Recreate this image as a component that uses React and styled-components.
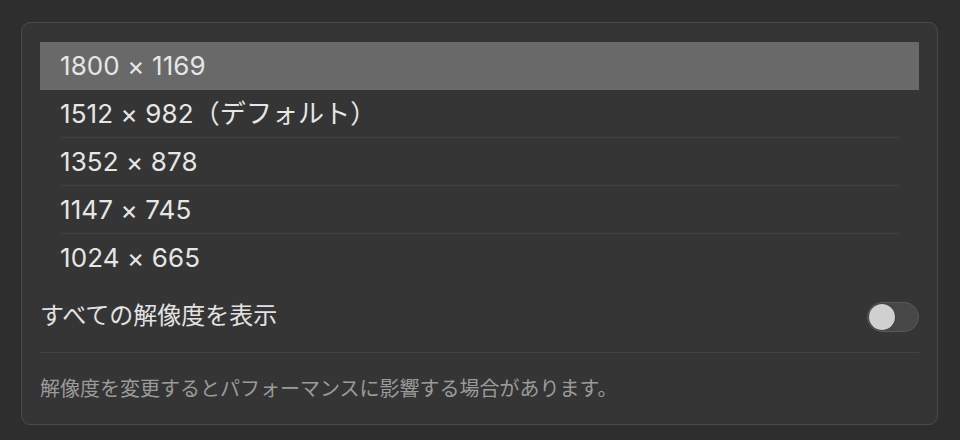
import React, { useState } from "react";
import styled, { createGlobalStyle } from "styled-components";

const GlobalStyle = createGlobalStyle`
  html, body {
    margin: 0;
    padding: 0;
    background: #2e2e2e;
  }
  body {
    font-family: "Inter", "Noto Sans CJK JP", sans-serif;
    -webkit-font-smoothing: antialiased;
  }
`;

const RESOLUTIONS = [
  "1800 × 1169",
  "1512 × 982（デフォルト）",
  "1352 × 878",
  "1147 × 745",
  "1024 × 665",
];

export const App = () => {
  const [selected, setSelected] = useState(0);
  const [showAll, setShowAll] = useState(false);

  return (
    <>
      <GlobalStyle />
      <StyledPage>
        <StyledPanel>
          <StyledList>
            {RESOLUTIONS.map((label, i) => (
              <StyledRow
                key={label}
                $selected={i === selected}
                $divider={i > 0 && i !== selected && i - 1 !== selected}
                onClick={() => setSelected(i)}
              >
                {label}
              </StyledRow>
            ))}
          </StyledList>
          <StyledToggleRow>
            <StyledToggleLabel>すべての解像度を表示</StyledToggleLabel>
            <StyledSwitch $on={showAll} onClick={() => setShowAll(!showAll)}>
              <StyledKnob $on={showAll} />
            </StyledSwitch>
          </StyledToggleRow>
          <StyledNote>解像度を変更するとパフォーマンスに影響する場合があります。</StyledNote>
        </StyledPanel>
      </StyledPage>
    </>
  );
};
export default App;

const StyledPage = styled.div`
  width: 960px;
  height: 440px;
  padding: 22px 0 0 21px;
  box-sizing: border-box;
`;

const StyledPanel = styled.div`
  width: 917px;
  height: 403px;
  box-sizing: border-box;
  border: 1px solid #4a4a4a;
  border-radius: 9px;
  background: #353535;
  padding: 19px 18px 0 18px;
  display: flex;
  flex-direction: column;
`;

const StyledList = styled.div`
  display: flex;
  flex-direction: column;
`;

const StyledRow = styled.div`
  position: relative;
  height: 48px;
  display: flex;
  align-items: center;
  padding: 0 20px;
  font-size: 26px;
  line-height: 1;
  letter-spacing: 0.1px;
  color: #e6e6e6;
  background: ${(p) => (p.$selected ? "#696969" : "transparent")};
  cursor: default;

  &::before {
    content: "";
    display: ${(p) => (p.$divider ? "block" : "none")};
    position: absolute;
    top: -1px;
    left: 20px;
    right: 20px;
    height: 1px;
    background: #414141;
  }
`;

const StyledToggleRow = styled.div`
  height: 70px;
  display: flex;
  align-items: center;
  justify-content: space-between;
  border-bottom: 1px solid #434343;
`;

const StyledToggleLabel = styled.div`
  font-size: 24px;
  line-height: 1;
  margin-top: -3px;
  color: #e2e2e2;
`;

const StyledSwitch = styled.div`
  width: 52px;
  height: 30px;
  box-sizing: border-box;
  border-radius: 15px;
  border: 1px solid #5a5a5a;
  background: ${(p) => (p.$on ? "#0a84ff" : "#474747")};
  padding: 1px;
  display: flex;
  justify-content: ${(p) => (p.$on ? "flex-end" : "flex-start")};
`;

const StyledKnob = styled.div`
  width: 26px;
  height: 26px;
  border-radius: 50%;
  background: #d0d0d0;
  box-shadow: 0 0 1px rgba(0, 0, 0, 0.5);
`;

const StyledNote = styled.div`
  padding-top: 26px;
  font-size: 20px;
  line-height: 1;
  color: #9b9b9b;
`;
